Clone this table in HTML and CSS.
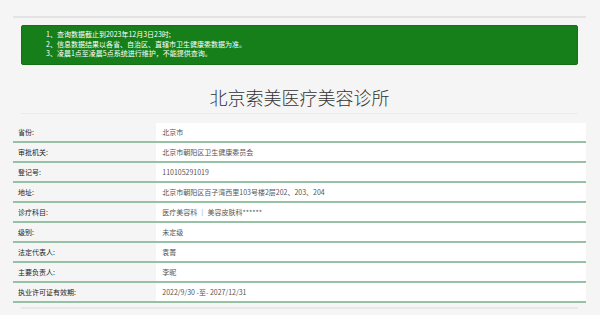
FILE: index.html
```html
<!DOCTYPE html>
<html lang="zh-CN">
<head>
<meta charset="utf-8">
<title>北京索美医疗美容诊所</title>
<link rel="stylesheet" href="styles.css">
</head>
<body>
<div class="page">
  <div class="notice">
    <p>1、查询数据截止到2023年12月3日23时;</p>
    <p>2、信息数据结果以各省、自治区、直辖市卫生健康委数据为准。</p>
    <p>3、凌晨1点至凌晨5点系统进行维护，不能提供查询。</p>
  </div>
  <h1 class="title">北京索美医疗美容诊所</h1>
  <div class="table">
    <div class="row"><div class="label">省份:</div><div class="value">北京市</div></div>
    <div class="row"><div class="label">审批机关:</div><div class="value">北京市朝阳区卫生健康委员会</div></div>
    <div class="row"><div class="label">登记号:</div><div class="value">110105291019</div></div>
    <div class="row"><div class="label">地址:</div><div class="value">北京市朝阳区百子湾西里103号楼2层202、203、204</div></div>
    <div class="row"><div class="label">诊疗科目:</div><div class="value">医疗美容科 ｜ 美容皮肤科******</div></div>
    <div class="row"><div class="label">级别:</div><div class="value">未定级</div></div>
    <div class="row"><div class="label">法定代表人:</div><div class="value">袁菁</div></div>
    <div class="row"><div class="label">主要负责人:</div><div class="value">李昵</div></div>
    <div class="row"><div class="label">执业许可证有效期:</div><div class="value">2022/9/30 -至- 2027/12/31</div></div>
  </div>
  <div class="foot"></div>
</div>
</body>
</html>
```

FILE: styles.css
```css
html, body {
  margin: 0;
  padding: 0;
  background: #f5f5f5;
}
body {
  font-family: "Noto Sans CJK SC", "Noto Sans", sans-serif;
  color: #333;
}
.page {
  margin: 16px 14px 0 13px;
  border-top: 2px solid #e4e4e4;
}
.notice {
  margin: 7px 8px 0 8px;
  background: #177f1a;
  border: 1px solid #157016;
  border-radius: 2px;
  padding: 4px 0 5px 24px;
  color: #fff;
  font-size: 7px;
  line-height: 9.5px;
}
.notice p {
  margin: 0;
}
.title {
  margin: 0 8px;
  padding: 21px 0 5px 0;
  font-size: 18px;
  line-height: 22px;
  font-weight: 300;
  text-align: center;
  color: #333;
  border-bottom: 1px solid #ebebeb;
}
.table {
  margin-top: 9px;
}
.row {
  display: flex;
  height: 18px;
  border-bottom: 2px solid #97c1a5;
  font-size: 7px;
  line-height: 18px;
}
.label {
  width: 25%;
  padding-left: 5px;
  box-sizing: border-box;
  background: #f5f5f5;
  color: #222;
}
.value {
  flex: 1;
  padding-left: 6px;
  background: #fff;
  color: #555;
}
.foot {
  margin: 4px 8px 0 8px;
  border-top: 2px solid #e8e8e8;
}
```
